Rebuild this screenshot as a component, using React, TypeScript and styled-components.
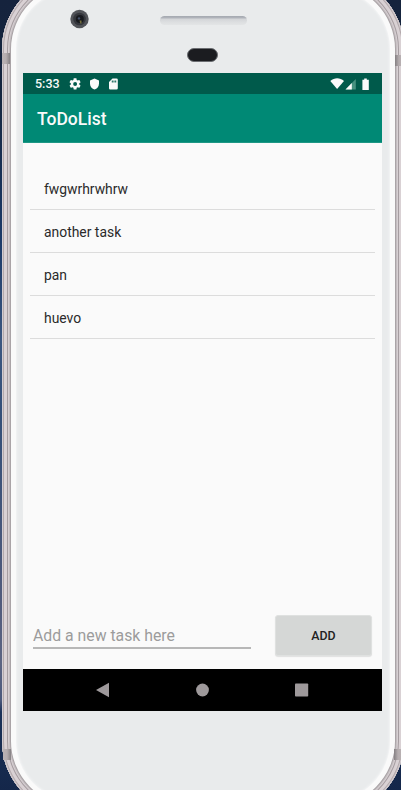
import React from "react";
import styled, { createGlobalStyle } from "styled-components";

const GlobalStyle = createGlobalStyle`
  *, *::before, *::after { box-sizing: border-box; }
  html, body { margin: 0; padding: 0; overflow: hidden; }
  body { font-family: Roboto, sans-serif; background: #142748; }
`;

const Backdrop = styled.div`
  position: relative;
  width: 401px;
  height: 790px;
  overflow: hidden;
  background: linear-gradient(to bottom, #15233d 0, #15253f 90px, #1c3a68 240px, #3b5680 340px, #344f78 420px, #515b7c 600px, #5c6482 662px, #4c597c 700px, #1b3158 712px, #14274a 790px);
`;

const Shell = styled.div`
  position: absolute;
  left: 2px;
  top: -25px;
  width: 402px;
  height: 840px;
  border-radius: 74px;
  background: #e9ebec;
  box-shadow: inset 0 0 0 1px #d3ccd0, inset 0 0 0 2px #b3a9ac, inset 0 0 0 5px #d9d1d4,
    inset 0 0 0 6px #a69da1, inset 0 0 0 7px #d7d0d3, inset 0 0 0 8px #c5bec1, inset 0 0 0 9px #aaa4a7,
    inset 0 0 0 14px #fafafa, inset 0 0 2px 15px #f3f4f5;
`;

const Antenna = styled.div<{ $x: number; $y: number; $flip?: boolean }>`
  position: absolute;
  left: ${(p) => p.$x}px;
  top: ${(p) => p.$y}px;
  width: 8px;
  height: 11px;
  background: linear-gradient(${(p) => (p.$flip ? "to left" : "to right")}, #b9b1b3, #b5adaf 50%, #858083);
`;

const Phone = styled.main`
  position: relative;
  display: flex;
  flex-direction: column;
  width: 359px;
  margin-left: 23px;
`;

const Hardware = styled.header`
  height: 73px;
  position: relative;
`;

const Camera = styled.svg`
  position: absolute;
  left: 47px;
  top: 9px;
`;

const Speaker = styled.div`
  position: absolute;
  left: 137px;
  top: 16px;
  width: 87px;
  height: 9px;
  border-radius: 5px;
  background: linear-gradient(#a4a8b0 0, #b2b5bc 2px, #d3d5d8 3px, #dcdee0 6px, #e3e5e6 9px);
`;

const Sensor = styled.div`
  position: absolute;
  left: 164px;
  top: 48px;
  width: 31px;
  height: 14px;
  border-radius: 7px;
  border: 1px solid #6b6d71;
  background: #1b1c20;
`;

const StatusBar = styled.div`
  display: flex;
  align-items: center;
  height: 21px;
  padding: 0 12px;
  background: #005a4b;
  color: #fafafa;
`;

const Clock = styled.span`
  width: 34px;
  font-size: 12.5px;
  font-weight: 500;
  line-height: 21px;
`;

const StatusIcons = styled.svg`
  display: block;
`;

const Spacer = styled.div`
  flex: 1;
`;

const AppBar = styled.div`
  height: 49px;
  padding: 2px 14px 0;
  background: #008975;
  border-bottom: 1px solid #1e9785;
  color: #fafafa;
`;

const Title = styled.h1`
  margin: 0;
  font-size: 17.5px;
  font-weight: 500;
  line-height: 47px;
`;

const Content = styled.section`
  display: flex;
  flex-direction: column;
  height: 526px;
  padding: 24px 7px 12px;
  background: #fafafa;
`;

const TaskList = styled.ul`
  flex: 1;
  margin: 0;
  padding: 0;
  list-style: none;
`;

const Task = styled.li`
  height: 43px;
  padding-left: 14px;
  border-bottom: 1px solid #dcdcdc;
  color: #2a2a2a;
  font-size: 13.9px;
  line-height: 44px;
`;

const EntryRow = styled.form`
  display: flex;
  align-items: flex-start;
  gap: 24px;
  height: 42px;
  padding: 0 3px;
`;

const Entry = styled.input`
  width: 218px;
  height: 34px;
  padding: 9px 0 0;
  border: 0;
  border-bottom: 2px solid #b7b7b7;
  border-radius: 0;
  outline: 0;
  background: transparent;
  color: #222;
  font: 400 15.8px Roboto, sans-serif;
  &::placeholder { color: #9c9c9c; opacity: 1; }
`;

const AddButton = styled.button`
  width: 97px;
  height: 41px;
  padding: 0 0 1px;
  border: 1px solid #dfe1e0;
  border-radius: 3px;
  background: #d5d7d6;
  box-shadow: 0 1px 1px #e0e0e0;
  color: #222;
  font: 500 12.4px Roboto, sans-serif;
`;

const NavBar = styled.nav`
  display: flex;
  align-items: center;
  height: 42px;
  background: #000;
`;

export default function App() {
  return (
    <Backdrop>
      <GlobalStyle />
      <Shell />
      <Antenna $x={2} $y={53} />
      <Antenna $x={395} $y={55} $flip />
      <Antenna $x={3} $y={749} />
      <Antenna $x={394} $y={749} $flip />
      <Phone>
        <Hardware>
          <Camera width="20" height="20" viewBox="0 0 20 20">
            <circle cx="9.5" cy="10" r="9.2" fill="#525459" />
            <circle cx="9.5" cy="10" r="6.3" fill="#34363c" />
            <circle cx="9.8" cy="10" r="4" fill="#17191e" />
            <circle cx="9" cy="9.4" r="1.2" fill="#44506a" />
            <path d="M9.5 11.5h2v3h-1.2z" fill="#76713b" />
          </Camera>
          <Speaker />
          <Sensor />
        </Hardware>
        <StatusBar>
          <Clock>5:33</Clock>
          <StatusIcons width="50" height="14" viewBox="0 0 50 14" fill="#fafafa">
            <path transform="translate(-.6 .2) scale(.56)" d="M19.4 13c0-.3.1-.6.1-1s0-.7-.1-1l2.1-1.7c.2-.1.2-.4.1-.6l-2-3.5c-.1-.2-.4-.3-.6-.2l-2.5 1c-.5-.4-1.1-.7-1.7-1l-.4-2.6c0-.2-.2-.4-.5-.4h-4c-.3 0-.5.2-.5.4L9 5c-.6.3-1.2.6-1.7 1l-2.5-1c-.2-.1-.5 0-.6.2l-2 3.5c-.1.2-.1.5.1.6L4.4 11c0 .3-.1.6-.1 1s0 .7.1 1l-2.1 1.7c-.2.1-.2.4-.1.6l2 3.5c.1.2.4.3.6.2l2.5-1c.5.4 1.1.7 1.7 1l.4 2.6c0 .2.2.4.5.4h4c.3 0 .5-.2.5-.4l.4-2.6c.6-.3 1.2-.6 1.7-1l2.5 1c.2.1.5 0 .6-.2l2-3.5c.1-.2.1-.5-.1-.6zM12 15.5a3.5 3.5 0 1 1 0-7 3.5 3.5 0 0 1 0 7z" />
            <path d="M25.5 1.4l4.5 2v3.3c0 3-2 5-4.5 5.8C23 11.7 21 9.7 21 6.7V3.4z" />
            <path fillRule="evenodd" d="M43.5 1.5h4q1.3 0 1.3 1.3v8.4q0 1.3-1.3 1.3h-6.2q-1.3 0-1.3-1.3V5zM42.8 3.4v2h1v-2zm1.7 0v2h1v-2zm1.7 0v2h1v-2z" />
          </StatusIcons>
          <Spacer />
          <StatusIcons width="40" height="14" viewBox="0 0 40 14" fill="#fafafa">
            <path d="M.3 4C4.5.4 9.8.4 14 4L7.1 12z" />
            <path d="M25.8 2v10.5H15.5z" fill="#469180" />
            <path d="M21.8 6.1v6.4h-6.3z" />
            <path d="M34.2 1.5h2.6v1.3h2v10.2h-6.4V2.8h1.8z" />
          </StatusIcons>
        </StatusBar>
        <AppBar>
          <Title>ToDoList</Title>
        </AppBar>
        <Content>
          <TaskList>
            {["fwgwrhrwhrw", "another task", "pan", "huevo"].map((task) => (
              <Task key={task}>{task}</Task>
            ))}
          </TaskList>
          <EntryRow onSubmit={(e) => e.preventDefault()}>
            <Entry placeholder="Add a new task here" />
            <AddButton type="submit">ADD</AddButton>
          </EntryRow>
        </Content>
        <NavBar>
          <svg width="359" height="42" viewBox="0 0 359 42" fill="#9e999b">
            <path d="M73 21l13-7.2v14.4z" />
            <circle cx="179.5" cy="21" r="6.4" />
            <rect x="272" y="14.4" width="13.2" height="13.2" rx=".8" />
          </svg>
        </NavBar>
      </Phone>
    </Backdrop>
  );
}
